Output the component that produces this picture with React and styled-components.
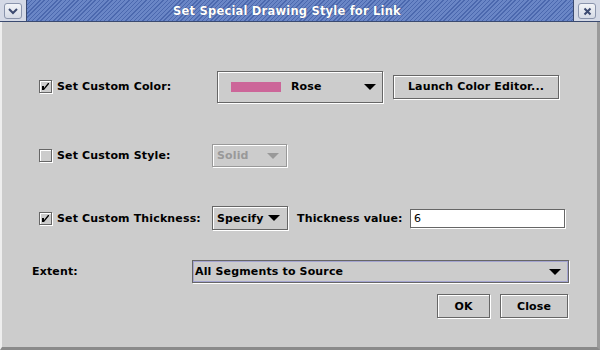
import React from "react";
import styled, { createGlobalStyle } from "styled-components";

const Global = createGlobalStyle`
  html, body { margin: 0; padding: 0; background: #cccccc; }
  #root { width: 600px; height: 350px; }
  * { box-sizing: border-box; }
`;

const Frame = styled.div`
  width: 600px;
  height: 350px;
  background: #cccccc;
  display: flex;
  flex-direction: column;
  font-family: "DejaVu Sans", "Liberation Sans", sans-serif;
  font-weight: bold;
  font-size: 11px;
  letter-spacing: 0.15px;
  color: #000;
  border-left: 2px solid #eeeeee;
  border-right: 3px solid #9a9a9a;
  border-bottom: 3px solid #8a8a8a;
`;

const TitleBar = styled.div`
  height: 22px;
  display: flex;
  align-items: stretch;
  background: #d4d9e6;
  margin-left: -2px;
  margin-right: -3px;
  border-bottom: 1px solid #3a4a70;
`;

const TitleButton = styled.div`
  width: 18px;
  height: 16px;
  margin: 3px 4px 0 4px;
  border: 1px solid #8a94ac;
  border-radius: 3px;
  background: linear-gradient(#f2f4f8, #d6dbe6);
  display: flex;
  align-items: center;
  justify-content: center;
`;

const TitleStripe = styled.div`
  flex: 1;
  background-color: #5571b6;
  background-image: repeating-linear-gradient(
    135deg,
    #4b68ae 0px,
    #4b68ae 1px,
    #6a86c6 1px,
    #6a86c6 3px
  );
  border-left: 1px solid #3a4a70;
  border-right: 1px solid #3a4a70;
  display: flex;
  align-items: center;
  justify-content: center;
  color: #ffffff;
  font-size: 11.5px;
  letter-spacing: 0.2px;
  text-shadow: 0 0 1px #2a3a66;
  padding-right: 26px;
`;

const Body = styled.div`
  display: flex;
  flex-direction: column;
  padding-left: 37px;
`;

const Row = styled.div`
  display: flex;
  align-items: center;
  height: ${(p) => p.$h}px;
  margin-top: ${(p) => p.$top}px;
  margin-left: ${(p) => p.$indent || 0}px;
`;

const LabelCol = styled.div`
  width: ${(p) => p.$w}px;
  display: flex;
  align-items: center;
  gap: 5px;
  flex-shrink: 0;
`;

const Box = styled.span`
  width: 13px;
  height: 13px;
  border: 1px solid #666;
  box-shadow: inset 1px 1px 0 #fff, 1px 1px 0 #fff;
  background: #cccccc;
  display: inline-flex;
  align-items: center;
  justify-content: center;
`;

const Combo = styled.div`
  width: ${(p) => p.$w}px;
  height: ${(p) => p.$h}px;
  border: 1px solid ${(p) => (p.$disabled ? "#999" : "#666")};
  box-shadow: ${(p) =>
    p.$focus
      ? "inset 0 0 0 1px #a3a3d0, 1px 1px 0 #fff"
      : "inset 1px 1px 0 #fff, 1px 1px 0 #fff"};
  display: flex;
  align-items: center;
  padding: 0 ${(p) => p.$pr || 7}px 0 ${(p) => p.$pl || 4}px;
  color: ${(p) => (p.$disabled ? "#999" : "#000")};
  flex-shrink: 0;
`;

const ComboText = styled.span`
  flex: 1;
`;

const Swatch = styled.span`
  width: 50px;
  height: 10px;
  background: #cc6699;
  margin-right: 10px;
`;

const Arrow = styled.span`
  width: 0;
  height: 0;
  border-left: 6px solid transparent;
  border-right: 6px solid transparent;
  border-top: 6px solid ${(p) => (p.$disabled ? "#999" : "#000")};
`;

const Button = styled.div`
  width: ${(p) => p.$w}px;
  height: 24px;
  border: 1px solid #666;
  box-shadow: inset 1px 1px 0 #fff, 1px 1px 0 #fff;
  display: flex;
  align-items: center;
  justify-content: center;
  margin-left: ${(p) => p.$ml || 0}px;
  flex-shrink: 0;
`;

const Label = styled.span`
  width: ${(p) => p.$w}px;
  margin-left: ${(p) => p.$ml || 0}px;
  flex-shrink: 0;
`;

const Field = styled.div`
  width: 155px;
  height: 19px;
  background: #fff;
  border: 1px solid #666;
  box-shadow: 1px 1px 0 #fff;
  display: flex;
  align-items: center;
  padding-left: 3px;
  font-weight: normal;
`;

const ButtonsRow = styled.div`
  display: flex;
  justify-content: flex-end;
  margin-top: 11px;
  margin-right: 29px;
`;

const Check = ({ on }) => (
  <Box>
    {on && (
      <svg width="9" height="9" viewBox="0 0 9 9">
        <path d="M1 4 L1 8 L3 8 L8 2 L8 1 L7 1 L3 6 L3 4 Z" fill="#000" />
      </svg>
    )}
  </Box>
);

export default function App() {
  return (
    <>
      <Global />
      <Frame>
        <TitleBar>
          <TitleButton>
            <svg width="10" height="7" viewBox="0 0 10 7">
              <path d="M1 1 L5 5 L9 1" stroke="#3c4a70" strokeWidth="2" fill="none" />
            </svg>
          </TitleButton>
          <TitleStripe>Set Special Drawing Style for Link</TitleStripe>
          <TitleButton>
            <svg width="9" height="9" viewBox="0 0 9 9">
              <path d="M1.5 1.5 L7.5 7.5 M7.5 1.5 L1.5 7.5" stroke="#3c4a70" strokeWidth="2" />
            </svg>
          </TitleButton>
        </TitleBar>
        <Body>
          <Row $h={31} $top={49}>
            <LabelCol $w={178}>
              <Check on />
              <span>Set Custom Color:</span>
            </LabelCol>
            <Combo $w={166} $h={32} $pl={13} $pr={6}>
              <Swatch />
              <ComboText>Rose</ComboText>
              <Arrow />
            </Combo>
            <Button $w={166} $ml={10}>Launch Color Editor...</Button>
          </Row>
          <Row $h={23} $top={42}>
            <LabelCol $w={173}>
              <Check />
              <span>Set Custom Style:</span>
            </LabelCol>
            <Combo $w={75} $h={23} $disabled $pr={7}>
              <ComboText>Solid</ComboText>
              <Arrow $disabled />
            </Combo>
          </Row>
          <Row $h={24} $top={39}>
            <LabelCol $w={173}>
              <Check on />
              <span>Set Custom Thickness:</span>
            </LabelCol>
            <Combo $w={76} $h={24} $pr={7}>
              <ComboText>Specify</ComboText>
              <Arrow />
            </Combo>
            <Label $w={113} $ml={9}>Thickness value:</Label>
            <Field>6</Field>
          </Row>
          <Row $h={23} $top={30} $indent={-7}>
            <LabelCol $w={160}>
              <span>Extent:</span>
            </LabelCol>
            <Combo $w={377} $h={23} $focus $pl={2} $pr={7}>
              <ComboText>All Segments to Source</ComboText>
              <Arrow />
            </Combo>
          </Row>
          <ButtonsRow>
            <Button $w={53}>OK</Button>
            <Button $w={68} $ml={10}>Close</Button>
          </ButtonsRow>
        </Body>
      </Frame>
    </>
  );
}
